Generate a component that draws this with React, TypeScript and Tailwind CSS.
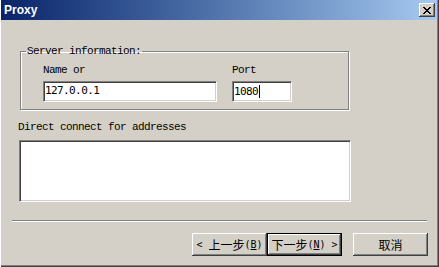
import React from "react";

const label = "font-['Liberation_Mono',monospace] text-[11px] tracking-[-0.6px] leading-[12px] text-black";
const field = "font-['DejaVu_Sans_Mono',monospace] text-[11px] tracking-[-0.6px] leading-[17px] text-black";
const sunken =
  "bg-white border border-t-[#808080] border-l-[#808080] border-r-white border-b-white shadow-[inset_1px_1px_0_#404040,inset_-1px_-1px_0_#d4d0c8]";
const raised = "bg-[#d4d0c8] shadow-[inset_-1px_-1px_0_#404040,inset_1px_1px_0_#fff,inset_-2px_-2px_0_#808080]";
const btnText = "font-['Noto_Sans_CJK_SC',sans-serif] text-[12px] leading-[14px] text-black";
const ascii = "font-['DejaVu_Sans_Mono',monospace] text-[10px] whitespace-pre";

const CloseGlyph = () => {
  const rows = ["XX....XX", ".XX..XX.", "..XXXX..", "...XX...", "..XXXX..", ".XX..XX.", "XX....XX"];
  return (
    <svg width="8" height="7" viewBox="0 0 8 7" shapeRendering="crispEdges">
      {rows.map((row, y) =>
        row.split("").map((c, x) => (c === "X" ? <rect key={`${x}-${y}`} x={x} y={y} width="1" height="1" fill="#000" /> : null))
      )}
    </svg>
  );
};

const App = () => {
  return (
    <div className="w-[439px] h-[267px] bg-[#d4d0c8] flex flex-col shadow-[inset_1px_0_0_#fff,inset_-1px_-1px_0_#404040,inset_-2px_-2px_0_#808080]">
      {/* title bar */}
      <div className="ml-[1px] mr-[2px] h-[20px] flex items-center justify-between bg-gradient-to-r from-[#0a246a] to-[#a6caf0] pl-[3px] pr-[2px]">
        <span className="font-['Liberation_Sans',sans-serif] font-bold text-[12px] leading-[14px] text-white">Proxy</span>
        <button className={`w-[16px] h-[14px] flex items-center justify-center ${raised}`}>
          <CloseGlyph />
        </button>
      </div>

      <fieldset className="ml-[20px] mt-[24px] w-[329px] border border-[#808080] shadow-[1px_1px_0_#fff,inset_1px_1px_0_#fff] pl-[5px] pt-[6px] pb-[7px]">
        <legend className={`${label} px-[1px] leading-[14px]`}>Server information:</legend>
        <div className="flex gap-[15px] ml-[17px]">
          <div className="flex flex-col">
            <span className={label}>Name or</span>
            <div className={`mt-[5px] w-[174px] h-[21px] pl-[1px] ${sunken} ${field}`}>127.0.0.1</div>
          </div>
          <div className="flex flex-col">
            <span className={label}>Port</span>
            <div className={`mt-[5px] w-[60px] h-[21px] pl-[1px] flex items-center ${sunken} ${field}`}>
              1080<span className="inline-block w-[1px] h-[13px] bg-black ml-[1px]" />
            </div>
          </div>
        </div>
      </fieldset>

      <span className={`${label} ml-[18px] mt-[11px]`}>Direct connect for addresses</span>
      <div className={`ml-[19px] mt-[7px] w-[332px] h-[62px] ${sunken}`} />

      <div className="ml-[12px] mt-[18px] w-[415px] h-[2px] border-t border-t-[#808080] border-b border-b-white" />

      <div className="flex ml-[192px] mt-[11px]">
        <button className={`w-[75px] h-[23px] flex items-center justify-center ${raised} ${btnText}`}>
          <span className={ascii}>{"< "}</span>上一步<span className={ascii}>(<u>B</u>)</span>
        </button>
        <button className={`w-[75px] h-[23px] flex items-center justify-center border border-black ${raised} ${btnText}`}>
          下一步<span className={ascii}>(<u>N</u>){" >"}</span>
        </button>
        <button className={`ml-[11px] w-[75px] h-[23px] flex items-center justify-center ${raised} ${btnText}`}>取消</button>
      </div>
    </div>
  );
};

export default App;
